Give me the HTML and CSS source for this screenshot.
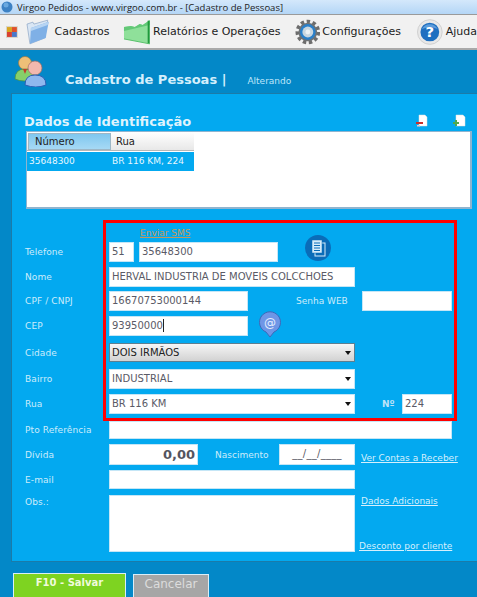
FILE: index.html
```html
<!DOCTYPE html>
<html lang="pt-BR">
<head>
<meta charset="utf-8">
<title>Virgoo Pedidos</title>
<link rel="stylesheet" href="styles.css">
</head>
<body>
<div class="titlebar">
  <svg class="title-icon" width="12" height="12" viewBox="0 0 12 12"><circle cx="6" cy="6" r="5.5" fill="#3d82c4"/><circle cx="5" cy="4" r="2.5" fill="#6aa9e0"/></svg>
  <span>Virgoo Pedidos - www.virgoo.com.br - [Cadastro de Pessoas]</span>
</div>
<nav class="menubar">
  <svg class="ic-app" width="12" height="12" viewBox="0 0 12 12"><rect width="12" height="12" fill="#d8d4c8"/><rect x="1" y="1" width="5" height="5" fill="#d9a520"/><rect x="6" y="1" width="5" height="5" fill="#e0502a"/><rect x="1" y="6" width="5" height="5" fill="#d94030"/><rect x="6" y="6" width="5" height="5" fill="#4a78c8"/></svg>
  <svg class="ic-folder" width="24" height="26" viewBox="0 0 24 26"><path d="M1 5 L7 3 L8 5 L22 1 L19 19 L4 25 Z" fill="#d9e6f4" stroke="#7b98bd" stroke-width=".6"/><path d="M5 9 L23 2.5 L20 19 L4 25 Z" fill="#7fb0e6"/><path d="M5 9 L23 2.5 L22 6 L5 12 Z" fill="#b6d4f3"/></svg>
  <span class="menu-label m-cad">Cadastros</span>
  <svg class="ic-chart" width="28" height="26" viewBox="0 0 28 26"><path d="M1 8 L8 7 L12 8 L17 5 L20 6 L27 1 L27 25 L1 20 Z" fill="#8fe09a"/><path d="M1 8 L8 7 L12 8 L17 5 L20 6 L27 1 L27 6 L1 12 Z" fill="#63c877"/><path d="M26 1.5 V25" stroke="#1f9a3c" stroke-width="2"/><path d="M1 20 L27 25" stroke="#58c06c" stroke-width="1"/></svg>
  <span class="menu-label m-rel">Relatórios e Operações</span>
  <svg class="ic-gear" width="26" height="26" viewBox="0 0 26 26"><circle cx="13" cy="13" r="10.5" fill="none" stroke="#6d6d6d" stroke-width="4" stroke-dasharray="3.4 2.6"/><circle cx="13" cy="13" r="9.5" fill="#6f7274"/><circle cx="13" cy="13" r="8" fill="#2b7fc8"/><circle cx="13" cy="13" r="5.5" fill="#c9d6df"/><circle cx="13" cy="13" r="2.5" fill="#edf2f5"/></svg>
  <span class="menu-label m-cfg">Configurações</span>
  <svg class="ic-help" width="26" height="26" viewBox="0 0 26 26"><circle cx="13" cy="13" r="12.5" fill="#e8e8e8" stroke="#cfcfcf"/><circle cx="13" cy="13" r="9.5" fill="#1f6fc0"/><path d="M5 10 A9 9 0 0 1 21 10 Q13 7 5 10Z" fill="#5c9cdc"/><text class="help-mark" x="13" y="18" text-anchor="middle">?</text></svg>
  <span class="menu-label m-help">Ajuda</span>
</nav>
<main class="app">
  <header class="app-head">
    <svg class="ic-people" width="34" height="32" viewBox="0 0 34 32"><circle cx="11" cy="8" r="6.5" fill="#eebf78" stroke="#a07a3c" stroke-width=".7"/><path d="M1 24 Q1 14 11 14 Q20 14 20 24 Q10 28 1 24Z" fill="#86cf6a" stroke="#4f8f3a" stroke-width=".7"/><path d="M9 14 L13 14 L11 19Z" fill="#c43a2a"/><circle cx="21" cy="13" r="7" fill="#f2b8ae" stroke="#a06a60" stroke-width=".7"/><path d="M11 30 Q11 20 21 20 Q32 20 32 30 Q22 34 11 30Z" fill="#8fb8ee" stroke="#2d5fb4"/></svg>
    <h1 class="page-title">Cadastro de Pessoas |</h1>
    <span class="page-state">Alterando</span>
  </header>
  <section class="panel">
    <div class="id-head">
      <h2 class="id-title">Dados de Identificação</h2>
      <svg class="ic-doc" width="14" height="14" viewBox="0 0 14 14"><path d="M4 1 H10 L12 3 V12 H4Z" fill="#fff" stroke="#ddd" stroke-width=".5"/><rect x="1" y="8" width="7" height="2" fill="#c9302c"/><rect x="2" y="11" width="3" height="1.5" fill="#f0c8c8"/></svg>
      <svg class="ic-doc ic-doc-add" width="14" height="14" viewBox="0 0 14 14"><path d="M4 1 H11 L13 3 V12 H4Z" fill="#fff" stroke="#ddd" stroke-width=".5"/><path d="M1 9 H7 M4 6 V12" stroke="#4fa84f" stroke-width="2"/></svg>
    </div>
    <div class="list">
      <div class="list-head"><span class="col-a active">Número</span><span class="col-b">Rua</span></div>
      <div class="list-row"><span class="cell-a">35648300</span><span class="cell-b">BR 116 KM, 224</span></div>
    </div>

    <div class="form">
      <a class="sms" href="#">Enviar SMS</a>
      <div class="row r-tel">
        <label class="lbl">Telefone</label>
        <div class="field w-ddd">51</div>
        <div class="field w-phone">35648300</div>
        <svg class="ic-copy" width="26" height="26" viewBox="0 0 26 26"><circle cx="13" cy="13" r="13" fill="#0a6cb8"/><rect x="10" y="8" width="10" height="13" fill="#0a6cb8" stroke="#d6ecfa"/><rect x="7" y="5" width="10" height="13" fill="#d6ecfa" stroke="#0a6cb8" stroke-width=".5"/><path d="M9 8 H15 M9 10.5 H15 M9 13 H15 M9 15.5 H15" stroke="#0a6cb8"/></svg>
      </div>
      <div class="row r-nome">
        <label class="lbl">Nome</label>
        <div class="field w-long clip">HERVAL INDUSTRIA DE MOVEIS COLCCHOES</div>
      </div>
      <div class="row r-cpf">
        <label class="lbl">CPF / CNPJ</label>
        <div class="field w-mid">16670753000144</div>
        <span class="lbl-inline senha">Senha WEB</span>
        <div class="field w-senha"></div>
      </div>
      <div class="row r-cep">
        <label class="lbl">CEP</label>
        <div class="field w-mid">93950000<i class="caret"></i></div>
        <svg class="ic-at" width="22" height="27" viewBox="0 0 22 27"><path d="M11 26 L7 21 A10.5 10.5 0 1 1 15 21Z" fill="#6f96e6" stroke="#3f68b8"/><text class="at-mark" x="11" y="16" text-anchor="middle">@</text></svg>
      </div>
      <div class="row r-cid">
        <label class="lbl">Cidade</label>
        <div class="field w-long select active-select">DOIS IRMÃOS<i class="arrow"></i></div>
      </div>
      <div class="row r-bai">
        <label class="lbl">Bairro</label>
        <div class="field w-long select">INDUSTRIAL<i class="arrow"></i></div>
      </div>
      <div class="row r-rua">
        <label class="lbl">Rua</label>
        <div class="field w-long select">BR 116 KM<i class="arrow"></i></div>
        <span class="lbl-inline numero">Nº</span>
        <div class="field w-num">224</div>
      </div>
      <div class="row r-pto">
        <label class="lbl">Pto Referência</label>
        <div class="field w-full"></div>
      </div>
      <div class="row r-div">
        <label class="lbl">Dívida</label>
        <div class="field w-div money">0,00</div>
        <span class="lbl-inline nasc">Nascimento</span>
        <div class="field w-date">__/__/____</div>
        <a class="side-link l-ver" href="#">Ver Contas a Receber</a>
      </div>
      <div class="row r-mail">
        <label class="lbl">E-mail</label>
        <div class="field w-long"></div>
      </div>
      <div class="row r-obs">
        <label class="lbl lbl-top">Obs.:</label>
        <div class="field w-long obs"></div>
        <div class="side-col">
          <a class="side-link" href="#">Dados Adicionais</a>
          <a class="side-link l-desc" href="#">Desconto por cliente</a>
        </div>
      </div>
    </div>
  </section>
  <footer class="actions">
    <button class="btn btn-save" type="button">F10 - Salvar</button>
    <button class="btn btn-cancel" type="button">Cancelar</button>
  </footer>
  <div class="highlight"></div>
</main>
</body>
</html>
```
FILE: styles.css
```css
* { box-sizing: border-box; }
html, body { margin: 0; padding: 0; }
body {
  width: 477px;
  height: 597px;
  overflow: hidden;
  font-family: "DejaVu Sans", Verdana, sans-serif;
  background: #0388c8;
}
.titlebar {
  height: 14px;
  display: flex;
  align-items: center;
  gap: 4px;
  padding-left: 1px;
  background: linear-gradient(#d4e8fb, #b4d6f6);
  font-family: "Open Sans", sans-serif;
  font-size: 9.5px;
  color: #222;
  white-space: nowrap;
}
.menubar {
  height: 36px;
  display: flex;
  align-items: center;
  background: #f1f1f1;
  border-top: 1px solid #9a9a9a;
  border-bottom: 2px solid #a9a9a9;
}
.ic-app { margin-left: 6px; }
.ic-folder { margin-left: 8px; }
.ic-chart { margin-left: 14px; }
.ic-gear { margin-left: 14px; }
.ic-help { margin-left: 16px; }
.menu-label { font-size: 11px; color: #1c1c1c; white-space: nowrap; }
.m-cad { margin-left: 5px; }
.m-rel { margin-left: 2px; }
.m-cfg { margin-left: 2px; }
.m-help { margin-left: 3px; }
.help-mark { font: bold 15px "DejaVu Sans", sans-serif; fill: #fff; }
.at-mark { font: 12px "DejaVu Sans", sans-serif; fill: #e4eeff; }

.app { position: relative; height: 547px; overflow: hidden; }
.app-head { height: 43px; position: relative; display: flex; align-items: flex-end; padding-left: 14px; }
.ic-people { margin-bottom: 6px; }
.page-title {
  margin: 0 0 5px 17px;
  font-size: 13px;
  font-weight: bold;
  line-height: 16px;
  color: #d4effc;
}
.page-state { margin: 0 0 6px 21px; font-size: 9px; line-height: 12px; color: #bfe6fa; }
.panel {
  margin-left: 11px;
  height: 469px;
  background: #03a9f0;
  border: 1px solid #1b7ba9;
  border-right: 0;
  padding-left: 12px;
}
.id-head { height: 37px; display: flex; align-items: flex-end; }
.id-title {
  margin: 0 0 0 0;
  width: 393px;
  font-size: 13px;
  line-height: 16px;
  font-weight: bold;
  color: #dff3fd;
  padding-bottom: 1px;
}
.ic-doc { margin: 0 0 3px -2px; }
.ic-doc-add { margin-left: 23px; }
.list {
  margin: 0 0 0 2px;
  width: 446px;
  height: 78px;
  background: #fff;
  border: 1px solid #8fb4cf;
  border-width: 1px 2px 2px 1px;
}
.list-head {
  display: flex;
  width: 167px;
  height: 19px;
  padding: 1px 0 0 1px;
  background: linear-gradient(#fff, #e8e8e8);
  border-bottom: 1px solid #b7b7b7;
  font-size: 10px;
  line-height: 17px;
  color: #222;
}
.col-a { width: 83px; padding-left: 6px; }
.col-b { width: 83px; padding-left: 5px; }
.active { background: linear-gradient(#7fc7ef, #a6d9f5); border: 1px solid #9cb6c6; line-height: 15px; }
.list-row {
  display: flex;
  width: 167px;
  height: 19px;
  margin-top: 1px;
  background: #03a9f0;
  font-size: 9px;
  line-height: 18px;
  color: #e8f7fe;
}
.cell-a { width: 83px; padding-left: 2px; }
.cell-b { padding-left: 2px; }

.form { position: relative; padding-left: 1px; font-size: 10px; }
.sms {
  display: block;
  height: 13px;
  margin: 18px 0 0 115px;
  padding-top: 1px;
  font-size: 9px;
  line-height: 11px;
  color: #c49a5a;
  white-space: nowrap;
}
.row { display: flex; align-items: center; }
.r-tel { height: 20px; margin-top: 2px; }
.r-nome { height: 20px; margin-top: 5px; }
.r-cpf { height: 20px; margin-top: 4px; }
.r-cep { height: 20px; margin-top: 5px; }
.r-cid { height: 19px; margin-top: 7px; }
.r-bai { height: 20px; margin-top: 7px; }
.r-rua { height: 20px; margin-top: 5px; }
.r-pto { height: 18px; margin-top: 7px; }
.r-div { height: 21px; margin-top: 5px; }
.r-mail { height: 19px; margin-top: 5px; }
.r-obs { height: 57px; margin-top: 6px; align-items: flex-start; }
.lbl { width: 84px; flex: none; font-size: 9px; letter-spacing: .1px; color: #cdecfb; white-space: nowrap; }
.lbl-top { padding-top: 2px; }
.lbl-inline { font-size: 9px; color: #cdecfb; white-space: nowrap; }
.field {
  height: 100%;
  flex: none;
  background: #fff;
  border: 1px solid #c5e6f6;
  padding: 0 2px;
  font-size: 10px;
  line-height: 18px;
  color: #5a5a66;
  white-space: nowrap;
  position: relative;
}
.clip { overflow: hidden; }
.w-ddd { width: 25px; }
.w-phone { width: 139px; margin-left: 5px; }
.w-long { width: 246px; }
.w-mid { width: 139px; }
.w-senha { width: 90px; margin-left: 11px; }
.w-num { width: 50px; margin-left: 9px; padding-left: 2px; }
.w-full { width: 343px; }
.w-div { width: 89px; }
.w-date { width: 76px; margin-left: 9px; text-align: center; letter-spacing: .3px; }
.senha { margin-left: 48px; width: 55px; }
.numero { margin-left: 27px; width: 11px; color: #bfe3f7; font-weight: bold; }
.nasc { margin-left: 17px; width: 55px; }
.caret { display: inline-block; width: 1px; height: 13px; margin-left: 0; background: #222; vertical-align: -3px; }
.money { text-align: right; font-size: 13px; font-weight: bold; line-height: 19px; padding-right: 2px; color: #55555f; }
.ic-copy { margin: -9px 0 0 27px; flex: none; }
.ic-at { margin: -4px 0 0 11px; flex: none; }
.select .arrow {
  position: absolute;
  right: 3px;
  top: 7px;
  border: 3px solid transparent;
  border-top: 4px solid #111;
  border-bottom: 0;
}
.active-select {
  background: linear-gradient(#f6f6f6, #d2d2d2);
  border: 1px solid #5d7f90;
  color: #222;
  line-height: 17px;
}
.side-link { font-size: 9px; line-height: 12px; color: #d6f0fd; text-decoration: underline; white-space: nowrap; }
.l-ver { margin-left: 6px; padding-top: 7px; }
.side-col { width: 112px; height: 100%; display: flex; flex-direction: column; justify-content: space-between; padding-left: 6px; }
.l-desc { margin-left: -2px; margin-bottom: 0; }
.actions { margin: 11px 0 0 13px; display: flex; gap: 7px; align-items: flex-start; }
.btn { height: 26px; padding: 0; font-family: "DejaVu Sans", sans-serif; border: 1px solid #d9eef8; }
.btn-save { width: 113px; background: #7ed321; color: #f0fbdc; font-size: 10px; font-weight: bold; line-height: 16px; padding-bottom: 6px; }
.btn-cancel { width: 76px; margin-top: 1px; background: #a6a6a6; color: #dcdcdc; font-size: 12px; padding-bottom: 6px; }
.highlight {
  position: absolute;
  left: 103px;
  top: 170px;
  width: 354px;
  height: 201px;
  border: 3px solid #f00;
  pointer-events: none;
}
```
